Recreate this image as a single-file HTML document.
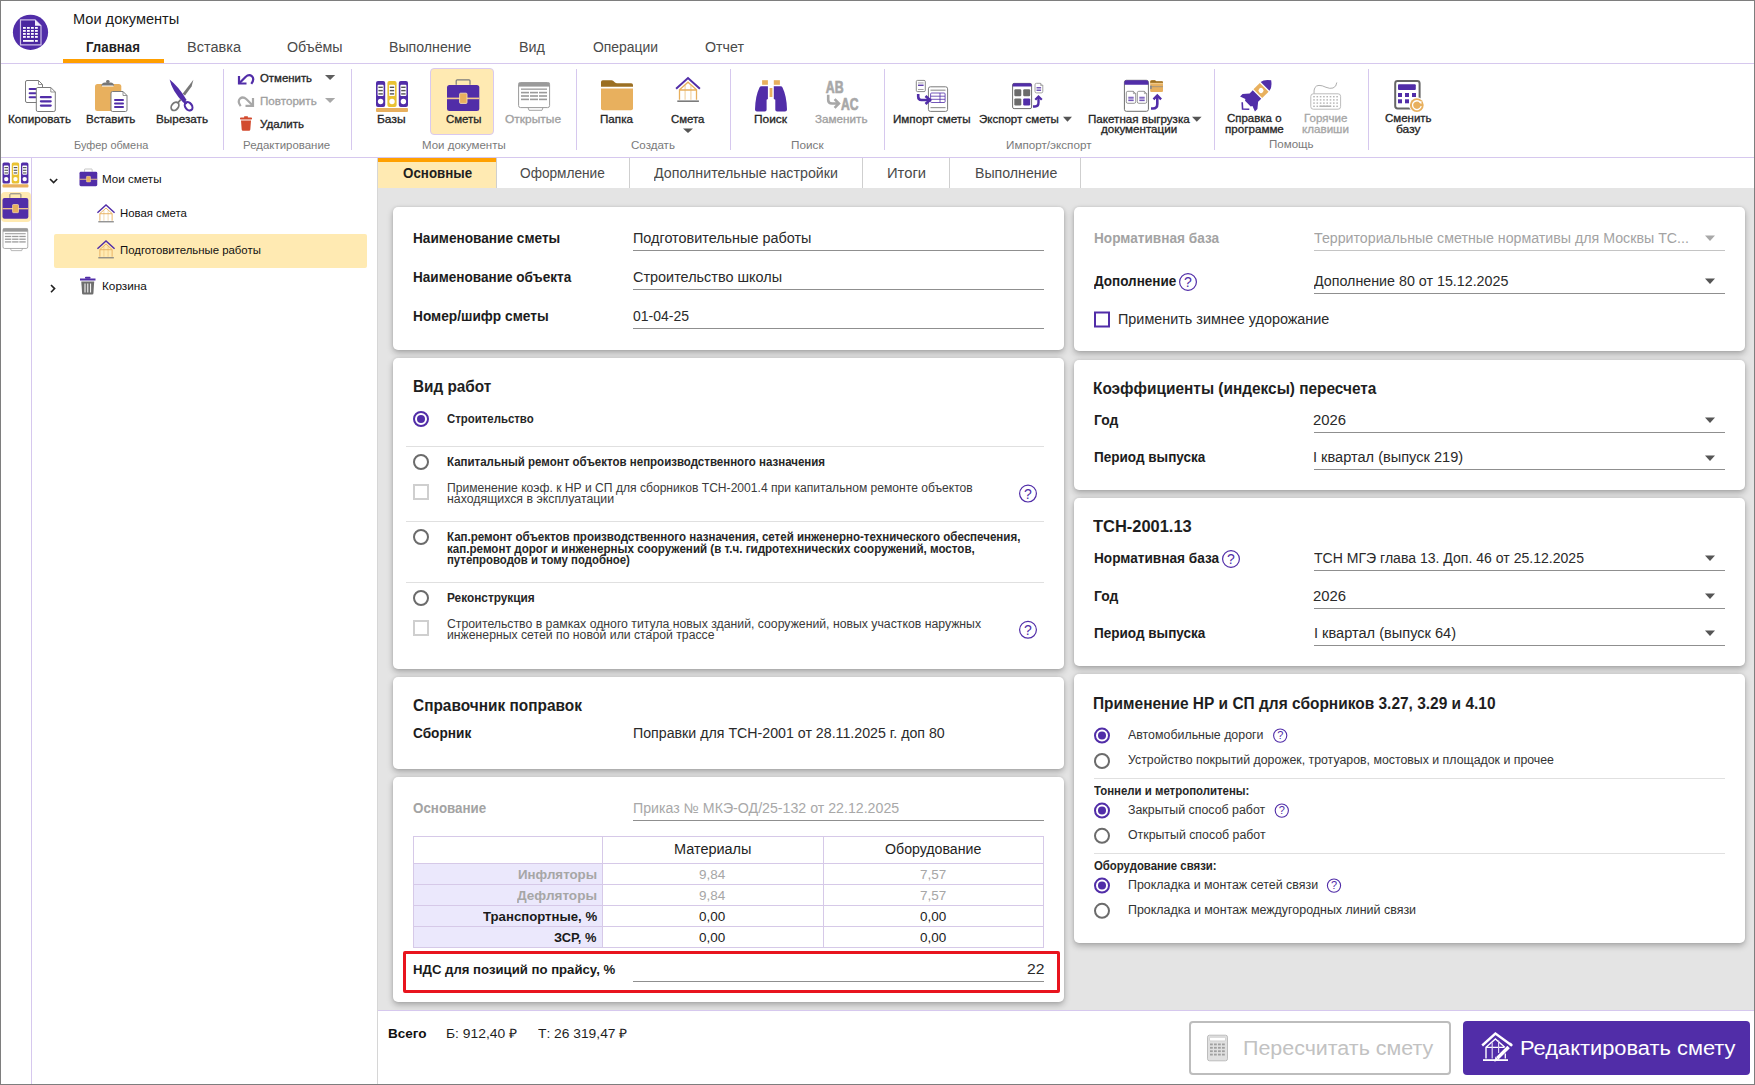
<!DOCTYPE html>
<html><head><meta charset="utf-8"><style>
html,body{margin:0;padding:0;}
body{width:1755px;height:1085px;overflow:hidden;position:relative;background:#fff;font-family:'Liberation Sans',sans-serif;}
.t{position:absolute;white-space:pre;z-index:5;}
svg.ov{position:absolute;left:0;top:0;z-index:4;}
</style></head><body>
<div style="position:absolute;left:63px;top:59px;width:101px;height:4px;background:#ff9f00"></div><div style="position:absolute;left:0px;top:63px;width:1755px;height:1px;background:#d6c8ee"></div><div style="position:absolute;left:223px;top:69px;width:1px;height:81px;background:#d6c8ee"></div><div style="position:absolute;left:351px;top:69px;width:1px;height:81px;background:#d6c8ee"></div><div style="position:absolute;left:576px;top:69px;width:1px;height:81px;background:#d6c8ee"></div><div style="position:absolute;left:730px;top:69px;width:1px;height:81px;background:#d6c8ee"></div><div style="position:absolute;left:884px;top:69px;width:1px;height:81px;background:#d6c8ee"></div><div style="position:absolute;left:1214px;top:69px;width:1px;height:81px;background:#d6c8ee"></div><div style="position:absolute;left:1368px;top:69px;width:1px;height:81px;background:#d6c8ee"></div><div style="position:absolute;left:0px;top:157px;width:1755px;height:1px;background:#d6c8ee"></div><div style="position:absolute;left:430px;top:68px;width:64px;height:67px;background:#ffeab2;border:1px solid #d9c9ef;border-radius:4px;box-sizing:border-box"></div><div style="position:absolute;left:31px;top:158px;width:1px;height:927px;background:#d6c8ee"></div><div style="position:absolute;left:1px;top:192px;width:30px;height:30px;background:#ffeab2;border-radius:4px"></div><div style="position:absolute;left:377px;top:158px;width:1px;height:927px;background:#d6d6d6"></div><div style="position:absolute;left:54px;top:234px;width:313px;height:34px;background:#ffeab2;border-radius:2px"></div><div style="position:absolute;left:378px;top:158px;width:1377px;height:30px;background:#fff"></div><div style="position:absolute;left:378px;top:158px;width:118px;height:30px;background:#ffeab2"></div><div style="position:absolute;left:378px;top:158px;width:118px;height:4px;background:#ffa000"></div><div style="position:absolute;left:496px;top:158px;width:1px;height:30px;background:#cfcfcf"></div><div style="position:absolute;left:629px;top:158px;width:1px;height:30px;background:#cfcfcf"></div><div style="position:absolute;left:862px;top:158px;width:1px;height:30px;background:#cfcfcf"></div><div style="position:absolute;left:949px;top:158px;width:1px;height:30px;background:#cfcfcf"></div><div style="position:absolute;left:1080px;top:158px;width:1px;height:30px;background:#cfcfcf"></div><div style="position:absolute;left:378px;top:188px;width:1376px;height:822px;background:#e4e4e4"></div><div style="position:absolute;left:393px;top:207px;width:671px;height:143px;background:#fff;border-radius:5px;box-shadow:0 3px 6px rgba(0,0,0,0.26), 0 0 3px rgba(0,0,0,0.10)"></div><div style="position:absolute;left:393px;top:358px;width:671px;height:311px;background:#fff;border-radius:5px;box-shadow:0 3px 6px rgba(0,0,0,0.26), 0 0 3px rgba(0,0,0,0.10)"></div><div style="position:absolute;left:393px;top:677px;width:671px;height:92px;background:#fff;border-radius:5px;box-shadow:0 3px 6px rgba(0,0,0,0.26), 0 0 3px rgba(0,0,0,0.10)"></div><div style="position:absolute;left:393px;top:777px;width:671px;height:225px;background:#fff;border-radius:5px;box-shadow:0 3px 6px rgba(0,0,0,0.26), 0 0 3px rgba(0,0,0,0.10)"></div><div style="position:absolute;left:1074px;top:207px;width:671px;height:144px;background:#fff;border-radius:5px;box-shadow:0 3px 6px rgba(0,0,0,0.26), 0 0 3px rgba(0,0,0,0.10)"></div><div style="position:absolute;left:1074px;top:360px;width:671px;height:130px;background:#fff;border-radius:5px;box-shadow:0 3px 6px rgba(0,0,0,0.26), 0 0 3px rgba(0,0,0,0.10)"></div><div style="position:absolute;left:1074px;top:498px;width:671px;height:168px;background:#fff;border-radius:5px;box-shadow:0 3px 6px rgba(0,0,0,0.26), 0 0 3px rgba(0,0,0,0.10)"></div><div style="position:absolute;left:1074px;top:674px;width:671px;height:269px;background:#fff;border-radius:5px;box-shadow:0 3px 6px rgba(0,0,0,0.26), 0 0 3px rgba(0,0,0,0.10)"></div><div style="position:absolute;left:633px;top:250px;width:411px;height:1px;background:#8f8f8f"></div><div style="position:absolute;left:633px;top:289px;width:411px;height:1px;background:#8f8f8f"></div><div style="position:absolute;left:633px;top:328px;width:411px;height:1px;background:#8f8f8f"></div><div style="position:absolute;left:406px;top:446px;width:638px;height:1px;background:#e0e0e0"></div><div style="position:absolute;left:406px;top:521px;width:638px;height:1px;background:#e0e0e0"></div><div style="position:absolute;left:406px;top:582px;width:638px;height:1px;background:#e0e0e0"></div><div style="position:absolute;left:633px;top:820px;width:411px;height:1px;background:#8f8f8f"></div><div style="position:absolute;left:413px;top:836px;width:631px;height:112px;border:1px solid #d6c9e8;box-sizing:border-box"></div><div style="position:absolute;left:414px;top:863px;width:188px;height:84px;background:#ebe8fc"></div><div style="position:absolute;left:413px;top:863px;width:631px;height:1px;background:#d6c9e8"></div><div style="position:absolute;left:413px;top:884px;width:631px;height:1px;background:#d6c9e8"></div><div style="position:absolute;left:413px;top:905px;width:631px;height:1px;background:#d6c9e8"></div><div style="position:absolute;left:413px;top:926px;width:631px;height:1px;background:#d6c9e8"></div><div style="position:absolute;left:602px;top:836px;width:1px;height:112px;background:#d6c9e8"></div><div style="position:absolute;left:823px;top:836px;width:1px;height:112px;background:#d6c9e8"></div><div style="position:absolute;left:403px;top:951px;width:657px;height:42px;border:3px solid #e8141e;border-radius:2px;box-sizing:border-box"></div><div style="position:absolute;left:633px;top:981px;width:411px;height:1px;background:#8f8f8f"></div><div style="position:absolute;left:1314px;top:250px;width:411px;height:1px;background:#c4c4c4"></div><div style="position:absolute;left:1314px;top:293px;width:411px;height:1px;background:#8f8f8f"></div><div style="position:absolute;left:1314px;top:432px;width:411px;height:1px;background:#8f8f8f"></div><div style="position:absolute;left:1314px;top:469px;width:411px;height:1px;background:#8f8f8f"></div><div style="position:absolute;left:1314px;top:570px;width:411px;height:1px;background:#8f8f8f"></div><div style="position:absolute;left:1314px;top:608px;width:411px;height:1px;background:#8f8f8f"></div><div style="position:absolute;left:1314px;top:645px;width:411px;height:1px;background:#8f8f8f"></div><div style="position:absolute;left:1094px;top:778px;width:631px;height:1px;background:#e0e0e0"></div><div style="position:absolute;left:1094px;top:853px;width:631px;height:1px;background:#e0e0e0"></div><div style="position:absolute;left:378px;top:1010px;width:1376px;height:1px;background:#d6c8ee"></div><div style="position:absolute;left:1189px;top:1021px;width:262px;height:54px;border:2px solid #bdbdbd;border-radius:4px;box-sizing:border-box;background:#fff"></div><div style="position:absolute;left:1463px;top:1021px;width:287px;height:54px;background:#512da8;border-radius:4px"></div><div style="position:absolute;left:0px;top:0px;width:1755px;height:1085px;border:1px solid #7e7e7e;box-sizing:border-box;z-index:50"></div>
<svg class="ov" width="1755" height="1085" viewBox="0 0 1755 1085"><circle cx="30.5" cy="32.3" r="17.6" fill="#512da8"/><path d="M20.5 19.8 H35 L41 25.8 V44.8 H20.5 Z" fill="#4a27a0" stroke="#cdbfe8" stroke-width="1.2"/><path d="M35 19.8 V25.8 H41 Z" fill="#f4f0fb"/><rect x="23" y="27" width="2.8" height="1.8" fill="#fff"/><rect x="27" y="27" width="2.8" height="1.8" fill="#fff"/><rect x="31" y="27" width="2.8" height="1.8" fill="#fff"/><rect x="35" y="27" width="2.8" height="1.8" fill="#fff"/><rect x="23" y="30" width="2.8" height="1.8" fill="#fff"/><rect x="27" y="30" width="2.8" height="1.8" fill="#fff"/><rect x="31" y="30" width="2.8" height="1.8" fill="#fff"/><rect x="35" y="30" width="2.8" height="1.8" fill="#fff"/><rect x="23" y="33" width="2.8" height="1.8" fill="#fff"/><rect x="27" y="33" width="2.8" height="1.8" fill="#fff"/><rect x="31" y="33" width="2.8" height="1.8" fill="#fff"/><rect x="35" y="33" width="2.8" height="1.8" fill="#fff"/><rect x="23" y="36" width="2.8" height="1.8" fill="#fff"/><rect x="27" y="36" width="2.8" height="1.8" fill="#fff"/><rect x="31" y="36" width="2.8" height="1.8" fill="#fff"/><rect x="35" y="36" width="2.8" height="1.8" fill="#fff"/><rect x="23" y="40" width="10.8" height="1.8" fill="#fff"/><rect x="35" y="40" width="2.8" height="1.8" fill="#fff"/><path d="M25.5 82.0 Q25.5 80.5 27.0 80.5 H38.5 L42.5 84.5 V101.0 Q42.5 102.5 41.0 102.5 H27.0 Q25.5 102.5 25.5 101.0 Z" fill="#fff" stroke="#7b7b7b" stroke-width="1"/><path d="M38.5 80.5 V84.5 H42.5" fill="none" stroke="#7b7b7b" stroke-width="0.8"/><rect x="28.6" y="87.9" width="8" height="2" rx="1" fill="#512da8"/><rect x="28.6" y="92.3" width="8" height="2" rx="1" fill="#512da8"/><rect x="28.6" y="96.3" width="8" height="2" rx="1" fill="#512da8"/><path d="M36.3 89.0 Q36.3 87.5 37.8 87.5 H50.8 L55.3 92.0 V110.0 Q55.3 111.5 53.8 111.5 H37.8 Q36.3 111.5 36.3 110.0 Z" fill="#fff" stroke="#7b7b7b" stroke-width="1"/><path d="M50.8 87.5 V92.0 H55.3" fill="none" stroke="#7b7b7b" stroke-width="0.8"/><rect x="39.8" y="96.10000000000001" width="12" height="2.2" rx="1.1" fill="#512da8"/><rect x="39.8" y="100.2" width="12" height="2.2" rx="1.1" fill="#512da8"/><rect x="39.8" y="104.5" width="12" height="2.2" rx="1.1" fill="#512da8"/><rect x="95" y="84" width="26.3" height="27" rx="2.5" fill="#e8b05e"/><path d="M101.5 86 Q101.5 82.5 105 82.5 H110.5 Q114 82.5 114 86 Z" fill="#777"/><rect x="106" y="80" width="3.6" height="3" rx="1.5" fill="#777"/><path d="M102 86 H113.5" stroke="#fff" stroke-width="1"/><path d="M111 93.0 Q111 91.5 112.5 91.5 H123 L127 95.5 V110.0 Q127 111.5 125.5 111.5 H112.5 Q111 111.5 111 110.0 Z" fill="#fff" stroke="#7b7b7b" stroke-width="1"/><path d="M123 91.5 V95.5 H127" fill="none" stroke="#7b7b7b" stroke-width="0.8"/><rect x="114" y="99" width="10" height="2" rx="1" fill="#512da8"/><rect x="114" y="102.4" width="10" height="2" rx="1" fill="#512da8"/><rect x="114" y="106" width="10" height="2" rx="1" fill="#512da8"/><path d="M169.6 79.6 Q178.5 86.5 186.6 100 L183.4 102.8 Q172 91 169.6 79.6 Z" fill="#512da8"/><path d="M183.5 100.5 L186.5 104" stroke="#512da8" stroke-width="2.2"/><ellipse cx="188.6" cy="106.3" rx="3.3" ry="4.6" transform="rotate(-38 188.6 106.3)" fill="none" stroke="#512da8" stroke-width="2.1"/><path d="M193.4 79.8 L191.6 86.5 L185 95.5 L182.6 93.8 Z" fill="#777"/><path d="M180.8 99.5 L177.8 103" stroke="#777" stroke-width="1.9"/><ellipse cx="175" cy="106.3" rx="3.3" ry="4.6" transform="rotate(38 175 106.3)" fill="none" stroke="#777" stroke-width="1.8"/><path d="M239 76 V83.5 H246.5" fill="none" stroke="#512da8" stroke-width="2.2"/><path d="M239 83.5 L245.5 77 Q249 73.8 252 76.3 Q254.8 79.2 251.3 83.8" fill="none" stroke="#512da8" stroke-width="2.2"/><path d="M253 98 V105.8 H245.5" fill="none" stroke="#a8a8a8" stroke-width="2.2"/><path d="M253 105.8 L246.5 99.3 Q243 96.1 240 98.6 Q237.2 101.5 240.7 106.1" fill="none" stroke="#a8a8a8" stroke-width="2.2"/><path d="M325 75 H335.2 L330.1 80 Z" fill="#5e5e5e"/><path d="M325 98 H335.2 L330.1 103 Z" fill="#a8a8a8"/><rect x="240" y="117.5" width="12" height="2" rx="0.8" fill="#d24a2e"/><rect x="244" y="116.3" width="4" height="1.6" rx="0.6" fill="#d24a2e"/><path d="M241 120.5 H251 L250.3 129.5 Q250.2 130.8 249 130.8 H243 Q241.8 130.8 241.7 129.5 Z" fill="#d24a2e"/><rect x="376.0" y="81" width="9.2" height="26.0" rx="2.0" fill="#512da8"/><rect x="377.6" y="84.8" width="6.0" height="11.2" rx="1.0" fill="#fff"/><rect x="378.4" y="86.6" width="4.4" height="1.4" fill="#555"/><rect x="378.4" y="89.9" width="4.4" height="1.4" fill="#555"/><rect x="378.4" y="93.2" width="4.4" height="1.4" fill="#555"/><circle cx="380.6" cy="101.5" r="2.7" fill="#fff"/><rect x="387.4" y="81" width="9.2" height="26.0" rx="2.0" fill="#e9c232"/><rect x="389.0" y="84.8" width="6.0" height="11.2" rx="1.0" fill="#fff"/><rect x="389.79999999999995" y="86.6" width="4.4" height="1.4" fill="#555"/><rect x="389.79999999999995" y="89.9" width="4.4" height="1.4" fill="#555"/><rect x="389.79999999999995" y="93.2" width="4.4" height="1.4" fill="#555"/><circle cx="392.0" cy="101.5" r="2.7" fill="#fff"/><rect x="398.8" y="81" width="9.2" height="26.0" rx="2.0" fill="#512da8"/><rect x="400.40000000000003" y="84.8" width="6.0" height="11.2" rx="1.0" fill="#fff"/><rect x="401.2" y="86.6" width="4.4" height="1.4" fill="#555"/><rect x="401.2" y="89.9" width="4.4" height="1.4" fill="#555"/><rect x="401.2" y="93.2" width="4.4" height="1.4" fill="#555"/><circle cx="403.40000000000003" cy="101.5" r="2.7" fill="#fff"/><rect x="376" y="108.0" width="32.0" height="4.0" rx="1.0" fill="#e8b05e"/><path d="M456.2 84.8 V80.8 Q456.2 79.8 457.2 79.8 H469.0 Q470.0 79.8 470.0 80.8 V84.8" fill="none" stroke="#7b7b7b" stroke-width="1.2"/><rect x="447" y="85.0" width="32.3" height="26.0" rx="2.5" fill="#512da8"/><rect x="447" y="97.6" width="32.3" height="1.6" fill="#f3c98a"/><rect x="459.6" y="93.2" width="7.4" height="10.2" rx="1.0" fill="#e8b05e" stroke="#f6dcae" stroke-width="0.9"/><rect x="518.6" y="82.6" width="31.0" height="25.0" rx="2.0" fill="#fff" stroke="#9a9a9a" stroke-width="1.0"/><rect x="518.6" y="82.6" width="31.0" height="4.0" fill="#9a9a9a"/><path d="M528.0 107.6 L529.0 110.3 H542.0 L543.0 107.6" fill="none" stroke="#9a9a9a" stroke-width="0.9"/><rect x="521.0" y="88.5" width="26.0" height="1.3" fill="#9a9a9a"/><rect x="521.0" y="91.8" width="8.0" height="1.6" fill="#9a9a9a"/><rect x="530.0" y="91.8" width="8.0" height="1.6" fill="#9a9a9a"/><rect x="539.0" y="91.8" width="8.0" height="1.6" fill="#9a9a9a"/><rect x="521.0" y="95.2" width="8.0" height="1.6" fill="#9a9a9a"/><rect x="530.0" y="95.2" width="8.0" height="1.6" fill="#9a9a9a"/><rect x="539.0" y="95.2" width="8.0" height="1.6" fill="#9a9a9a"/><rect x="521.0" y="98.6" width="8.0" height="1.6" fill="#9a9a9a"/><rect x="530.0" y="98.6" width="8.0" height="1.6" fill="#9a9a9a"/><rect x="539.0" y="98.6" width="8.0" height="1.6" fill="#9a9a9a"/><path d="M683 128.4 H693 L688 133 Z" fill="#555"/><path d="M601 86.8 V82 Q601 80.2 602.8 80.2 H611.5 Q612.6 80.2 613.4 81 L615 82.5 Q615.8 83.3 617 83.3 H631.2 Q633 83.3 633 85 V86.8 Z" fill="#9b6f22"/><path d="M601 88.4 H633 V108.3 Q633 110.3 631 110.3 H603 Q601 110.3 601 108.3 Z" fill="#e8b05e"/><path d="M676.1 88.7 L688.0 78.0 L699.9 88.7" fill="none" stroke="#512da8" stroke-width="2.0"/><path d="M679.5 99.7 V89.7 L688.0 82.2 L696.5 89.7 V99.7 M679.5 90.0 H696.5" fill="none" stroke="#e8b05e" stroke-width="1.3"/><path d="M685.1 85.2 V99.7 M690.9 85.2 V99.7" fill="none" stroke="#e8b05e" stroke-opacity="0.55" stroke-width="1.2"/><rect x="677.3" y="100.4" width="21.6" height="1.6" fill="#7b7b7b"/><rect x="762.1" y="80.2" width="5.8" height="4.6" fill="#e8b05e"/><rect x="773.8" y="80.2" width="6.1" height="4.6" fill="#e8b05e"/><path d="M759.5 87.5 Q760 86.2 761.5 86.2 H767.9 V99 L766.6 99.8 V109.8 Q766.6 111.5 764.8 111.5 H757 Q755 111.5 755 109.5 Q755.3 96 759.5 87.5 Z" fill="#512da8"/><path d="M782.5 87.5 Q782 86.2 780.5 86.2 H773.8 V99 L775.3 99.8 V109.8 Q775.3 111.5 777.1 111.5 H785 Q787 111.5 787 109.5 Q786.7 96 782.5 87.5 Z" fill="#512da8"/><rect x="769.6" y="88" width="2.8" height="9" fill="#e8b05e"/><text x="825.8" y="93.4" font-family="Liberation Sans" font-weight="700" font-size="16.5" fill="#a8a8a8" stroke="#a8a8a8" stroke-width="0.7" textLength="17.8" lengthAdjust="spacingAndGlyphs">AB</text><text x="841" y="110.2" font-family="Liberation Sans" font-weight="700" font-size="16.5" fill="#a8a8a8" stroke="#a8a8a8" stroke-width="0.7" textLength="17.5" lengthAdjust="spacingAndGlyphs">AC</text><path d="M828.2 94.8 V100 Q828.2 103.5 832 103.5 H838.5 M834.6 99.2 L838.9 103.5 L834.6 107.8" fill="none" stroke="#a8a8a8" stroke-width="2.6"/><path d="M1063 116.8 H1072 L1067.5 121.8 Z" fill="#555"/><path d="M1192 116.8 H1201.6 L1196.8 121.8 Z" fill="#555"/><rect x="916.3" y="80.4" width="9" height="11.2" rx="1.2" fill="#fff" stroke="#7b7b7b" stroke-width="0.9"/><rect x="918" y="82.5" width="5.6" height="0.9" fill="#999"/><rect x="918" y="84.6" width="5.6" height="1.3" fill="#512da8"/><rect x="918" y="89" width="5.6" height="0.9" fill="#999"/><rect x="928.4" y="86.8" width="19.2" height="24.6" rx="2" fill="#fff" stroke="#7b7b7b" stroke-width="1"/><rect x="930.5" y="89.6" width="15" height="1.2" fill="#999"/><rect x="930.5" y="107" width="15" height="1.2" fill="#999"/><rect x="930.6" y="93" width="14.5" height="9.5" rx="1" fill="none" stroke="#512da8" stroke-width="0.8"/><path d="M930.6 96.2 H945 M930.6 99.3 H945 M940 93 V102.5" stroke="#512da8" stroke-width="0.8"/><path d="M918.2 94 V96.5 Q918.2 100 921.5 100 H929" fill="none" stroke="#512da8" stroke-width="2.6"/><path d="M925.5 96 L930 100 L925.5 104" fill="none" stroke="#512da8" stroke-width="2.6"/><rect x="1012.6" y="83.4" width="19" height="25.2" rx="1.5" fill="#fff" stroke="#6e6e6e" stroke-width="1"/><path d="M1012.6 86.6 V84.9 Q1012.6 83.2 1014.3 83.2 H1029.9 Q1031.6 83.2 1031.6 84.9 V86.6 Z" fill="#512da8"/><rect x="1014.3" y="89.3" width="7" height="7" rx="1.2" fill="#6b6b6b"/><rect x="1023.2" y="89.3" width="7" height="7" rx="1.2" fill="#6b6b6b"/><rect x="1014.3" y="98.4" width="7" height="7" rx="1.2" fill="#6b6b6b"/><rect x="1023.2" y="98.4" width="7" height="7" rx="1.2" fill="#512da8"/><path d="M1035 84.8 Q1035 83.3 1036.5 83.3 H1040.6 L1042.8 85.5 V91.39999999999999 Q1042.8 92.89999999999999 1041.3 92.89999999999999 H1036.5 Q1035 92.89999999999999 1035 91.39999999999999 Z" fill="#fff" stroke="#8a8a8a" stroke-width="0.8"/><path d="M1040.6 83.3 V85.5 H1042.8" fill="none" stroke="#8a8a8a" stroke-width="0.6400000000000001"/><rect x="1036.5" y="87" width="4.6" height="0.8" fill="#512da8"/><rect x="1036.5" y="88.6" width="4.6" height="0.8" fill="#512da8"/><rect x="1036.5" y="90.2" width="4.6" height="0.8" fill="#512da8"/><path d="M1033 106.5 H1035 Q1038.5 106.5 1038.5 102.5 V97" fill="none" stroke="#512da8" stroke-width="2.4"/><path d="M1035.3 99.8 L1038.5 96.5 L1041.8 99.8" fill="none" stroke="#512da8" stroke-width="2.2"/><rect x="1124.4" y="80.3" width="24" height="31" rx="2" fill="#fff" stroke="#6e6e6e" stroke-width="1"/><path d="M1124.4 84.8 V82.3 Q1124.4 80.3 1126.4 80.3 H1146.4 Q1148.4 80.3 1148.4 82.3 V84.8 Z" fill="#512da8"/><path d="M1126.3 92.8 Q1126.3 91.3 1127.8 91.3 H1133.4 L1135.7 93.6 V101.8 Q1135.7 103.3 1134.2 103.3 H1127.8 Q1126.3 103.3 1126.3 101.8 Z" fill="#fff" stroke="#7b7b7b" stroke-width="0.8"/><path d="M1133.4 91.3 V93.6 H1135.7" fill="none" stroke="#7b7b7b" stroke-width="0.6400000000000001"/><rect x="1128.3" y="96.8" width="5.4" height="0.9" fill="#512da8"/><rect x="1128.3" y="98.5" width="5.4" height="0.9" fill="#512da8"/><rect x="1128.3" y="100.2" width="5.4" height="0.9" fill="#512da8"/><path d="M1137.3 92.8 Q1137.3 91.3 1138.8 91.3 H1144.4 L1146.7 93.6 V101.8 Q1146.7 103.3 1145.2 103.3 H1138.8 Q1137.3 103.3 1137.3 101.8 Z" fill="#fff" stroke="#7b7b7b" stroke-width="0.8"/><path d="M1144.4 91.3 V93.6 H1146.7" fill="none" stroke="#7b7b7b" stroke-width="0.6400000000000001"/><rect x="1139.3" y="96.8" width="5.4" height="0.9" fill="#512da8"/><rect x="1139.3" y="98.5" width="5.4" height="0.9" fill="#512da8"/><rect x="1139.3" y="100.2" width="5.4" height="0.9" fill="#512da8"/><path d="M1150.2 81.5 Q1150.2 80.3 1151.4 80.3 H1155 L1156.2 81.6 H1162 Q1163 81.6 1163 82.6 V91 Q1163 92 1162 92 H1151.2 Q1150.2 92 1150.2 91 Z" fill="#e8b05e"/><path d="M1150.2 82 Q1150.2 80.2 1152 80.2 H1155 L1156.2 81.3 H1162 Q1163 81.3 1163 82.3 V82.8 H1150.2 Z" fill="#9b6f22"/><path d="M1150.2 83.6 H1163" stroke="#f3d29a" stroke-width="0.8"/><path d="M1150.5 86.6 H1163" stroke="#7f8590" stroke-width="1.1" stroke-dasharray="1 1"/><rect x="1150.2" y="85.6" width="1.5" height="3.5" fill="#7f8590"/><path d="M1151 108.5 H1153 Q1157.3 108.5 1157.3 104 V96.5" fill="none" stroke="#512da8" stroke-width="2.6"/><path d="M1153.5 99.3 L1157.3 95.5 L1161.1 99.3" fill="none" stroke="#512da8" stroke-width="2.4"/><g transform="translate(1256 95.5) rotate(45)"><path d="M0 -21.5 Q6 -17 6.2 -12.8 H-6.2 Q-6 -17 0 -21.5 Z" fill="#512da8"/><path d="M-6.2 -11.6 H6.2 V-2.6 H-6.2 Z" fill="#e8b05e"/><circle cx="0" cy="-7.1" r="2.5" fill="#fff"/><path d="M-6 -1.4 H6 V3 L10.5 8.5 V12 L5 10 L4 11.5 H-4 L-5 10 L-10.5 12 V8.5 L-6 3 Z" fill="#512da8"/><path d="M-5 14.5 L0 19 L5 14.5" fill="none" stroke="#512da8" stroke-width="1.6"/></g><rect x="1310.8" y="93.8" width="29.8" height="15.4" rx="2.5" fill="#fff" stroke="#bdbdbd" stroke-width="1"/><path d="M1314 93.6 Q1313.5 85.5 1319 85.4 Q1322 85.3 1326 87.3 Q1330 89 1333 88 Q1336.5 86.8 1336.8 82.5" fill="none" stroke="#a6a6a6" stroke-width="0.9"/><rect x="1313.2" y="96.0" width="1.6" height="1.4" fill="#b5b5b5"/><rect x="1316.5" y="96.0" width="1.6" height="1.4" fill="#b5b5b5"/><rect x="1319.8" y="96.0" width="1.6" height="1.4" fill="#b5b5b5"/><rect x="1323.1000000000001" y="96.0" width="1.6" height="1.4" fill="#b5b5b5"/><rect x="1326.4" y="96.0" width="1.6" height="1.4" fill="#b5b5b5"/><rect x="1329.7" y="96.0" width="1.6" height="1.4" fill="#b5b5b5"/><rect x="1333.0" y="96.0" width="1.6" height="1.4" fill="#b5b5b5"/><rect x="1336.3" y="96.0" width="1.6" height="1.4" fill="#b5b5b5"/><rect x="1313.2" y="99.2" width="1.6" height="1.4" fill="#b5b5b5"/><rect x="1316.5" y="99.2" width="1.6" height="1.4" fill="#b5b5b5"/><rect x="1319.8" y="99.2" width="1.6" height="1.4" fill="#b5b5b5"/><rect x="1323.1000000000001" y="99.2" width="1.6" height="1.4" fill="#b5b5b5"/><rect x="1326.4" y="99.2" width="1.6" height="1.4" fill="#b5b5b5"/><rect x="1329.7" y="99.2" width="1.6" height="1.4" fill="#b5b5b5"/><rect x="1333.0" y="99.2" width="1.6" height="1.4" fill="#b5b5b5"/><rect x="1336.3" y="99.2" width="1.6" height="1.4" fill="#b5b5b5"/><rect x="1313.2" y="102.4" width="1.6" height="1.4" fill="#b5b5b5"/><rect x="1316.5" y="102.4" width="1.6" height="1.4" fill="#b5b5b5"/><rect x="1319.8" y="102.4" width="1.6" height="1.4" fill="#b5b5b5"/><rect x="1323.1000000000001" y="102.4" width="1.6" height="1.4" fill="#b5b5b5"/><rect x="1326.4" y="102.4" width="1.6" height="1.4" fill="#b5b5b5"/><rect x="1329.7" y="102.4" width="1.6" height="1.4" fill="#b5b5b5"/><rect x="1333.0" y="102.4" width="1.6" height="1.4" fill="#b5b5b5"/><rect x="1336.3" y="102.4" width="1.6" height="1.4" fill="#b5b5b5"/><rect x="1313.2" y="105.6" width="1.6" height="1.4" fill="#b5b5b5"/><rect x="1316.5" y="105.6" width="1.6" height="1.4" fill="#b5b5b5"/><rect x="1319.8" y="105.6" width="1.6" height="1.4" fill="#b5b5b5"/><rect x="1323.1000000000001" y="105.6" width="1.6" height="1.4" fill="#b5b5b5"/><rect x="1326.4" y="105.6" width="1.6" height="1.4" fill="#b5b5b5"/><rect x="1329.7" y="105.6" width="1.6" height="1.4" fill="#b5b5b5"/><rect x="1333.0" y="105.6" width="1.6" height="1.4" fill="#b5b5b5"/><rect x="1336.3" y="105.6" width="1.6" height="1.4" fill="#b5b5b5"/><rect x="1319.5" y="105.5" width="11.5" height="1.5" fill="#b5b5b5"/><rect x="1395.2" y="81" width="24.4" height="27.5" rx="2.4" fill="#fff" stroke="#666" stroke-width="2"/><rect x="1398" y="84.2" width="17.8" height="5.8" rx="1" fill="#512da8"/><rect x="1398" y="93.0" width="4" height="4" fill="#512da8"/><rect x="1405" y="93.0" width="4" height="4" fill="#512da8"/><rect x="1412" y="93.0" width="4" height="4" fill="#512da8"/><rect x="1398" y="99.3" width="4" height="4" fill="#512da8"/><rect x="1405" y="99.3" width="4" height="4" fill="#512da8"/><rect x="1412" y="99.3" width="4" height="4" fill="#512da8"/><circle cx="1416.8" cy="105.1" r="7.9" fill="#fff"/><circle cx="1416.8" cy="105.1" r="6.9" fill="#e8b05e"/><path d="M1420.3 102.3 A4.4 4.4 0 1 0 1421.2 106.2" fill="none" stroke="#fff" stroke-width="1.3"/><path d="M1418.6 101.6 L1421.6 101.2 L1421.3 104.2 Z" fill="#fff"/><rect x="2.5" y="162.5" width="7.452" height="21.060000000000002" rx="1.62" fill="#512da8"/><rect x="3.7960000000000003" y="165.578" width="4.86" height="9.072" rx="0.81" fill="#fff"/><rect x="4.444" y="167.036" width="3.5640000000000005" height="1.134" fill="#555"/><rect x="4.444" y="169.709" width="3.5640000000000005" height="1.134" fill="#555"/><rect x="4.444" y="172.382" width="3.5640000000000005" height="1.134" fill="#555"/><circle cx="6.226" cy="179.105" r="2.1870000000000003" fill="#fff"/><rect x="11.734000000000002" y="162.5" width="7.452" height="21.060000000000002" rx="1.62" fill="#e9c232"/><rect x="13.030000000000001" y="165.578" width="4.86" height="9.072" rx="0.81" fill="#fff"/><rect x="13.678" y="167.036" width="3.5640000000000005" height="1.134" fill="#555"/><rect x="13.678" y="169.709" width="3.5640000000000005" height="1.134" fill="#555"/><rect x="13.678" y="172.382" width="3.5640000000000005" height="1.134" fill="#555"/><circle cx="15.46" cy="179.105" r="2.1870000000000003" fill="#fff"/><rect x="20.968000000000004" y="162.5" width="7.452" height="21.060000000000002" rx="1.62" fill="#512da8"/><rect x="22.264000000000003" y="165.578" width="4.86" height="9.072" rx="0.81" fill="#fff"/><rect x="22.912000000000003" y="167.036" width="3.5640000000000005" height="1.134" fill="#555"/><rect x="22.912000000000003" y="169.709" width="3.5640000000000005" height="1.134" fill="#555"/><rect x="22.912000000000003" y="172.382" width="3.5640000000000005" height="1.134" fill="#555"/><circle cx="24.694000000000003" cy="179.105" r="2.1870000000000003" fill="#fff"/><rect x="2.5" y="184.37" width="25.92" height="3.24" rx="0.81" fill="#e8b05e"/><path d="M9.86 197.8 V194.60000000000002 Q9.86 193.8 10.66 193.8 H20.1 Q20.900000000000002 193.8 20.900000000000002 194.60000000000002 V197.8" fill="none" stroke="#7b7b7b" stroke-width="0.96"/><rect x="2.5" y="197.96" width="25.84" height="20.8" rx="2.0" fill="#512da8"/><rect x="2.5" y="208.04000000000002" width="25.84" height="1.2800000000000002" fill="#f3c98a"/><rect x="12.58" y="204.52" width="5.920000000000001" height="8.16" rx="0.8" fill="#e8b05e" stroke="#f6dcae" stroke-width="0.7200000000000001"/><rect x="2.98" y="228.48" width="24.8" height="20.0" rx="1.6" fill="#fff" stroke="#9a9a9a" stroke-width="0.8"/><rect x="2.98" y="228.48" width="24.8" height="3.2" fill="#9a9a9a"/><path d="M10.5 248.48000000000002 L11.3 250.64 H21.700000000000003 L22.5 248.48000000000002" fill="none" stroke="#9a9a9a" stroke-width="0.7200000000000001"/><rect x="4.9" y="233.2" width="20.8" height="1.04" fill="#9a9a9a"/><rect x="4.9" y="235.84" width="6.4" height="1.2800000000000002" fill="#9a9a9a"/><rect x="12.100000000000001" y="235.84" width="6.4" height="1.2800000000000002" fill="#9a9a9a"/><rect x="19.3" y="235.84" width="6.4" height="1.2800000000000002" fill="#9a9a9a"/><rect x="4.9" y="238.56" width="6.4" height="1.2800000000000002" fill="#9a9a9a"/><rect x="12.100000000000001" y="238.56" width="6.4" height="1.2800000000000002" fill="#9a9a9a"/><rect x="19.3" y="238.56" width="6.4" height="1.2800000000000002" fill="#9a9a9a"/><rect x="4.9" y="241.28" width="6.4" height="1.2800000000000002" fill="#9a9a9a"/><rect x="12.100000000000001" y="241.28" width="6.4" height="1.2800000000000002" fill="#9a9a9a"/><rect x="19.3" y="241.28" width="6.4" height="1.2800000000000002" fill="#9a9a9a"/><path d="M50 179 L53.6 182.6 L57.2 179" fill="none" stroke="#222" stroke-width="1.6"/><path d="M51 285 L54.6 288.6 L51 292.2" fill="none" stroke="#222" stroke-width="1.6"/><path d="M84.56 171.75 V169.55 Q84.56 169 85.11 169 H91.6 Q92.15 169 92.15 169.55 V171.75" fill="none" stroke="#aaa" stroke-width="0.66"/><rect x="79.5" y="171.86" width="17.765" height="14.3" rx="1.375" fill="#512da8"/><rect x="79.5" y="178.79" width="17.765" height="0.8800000000000001" fill="#f3c98a"/><rect x="86.43" y="176.37" width="4.07" height="5.61" rx="0.55" fill="#e8b05e" stroke="#f6dcae" stroke-width="0.49500000000000005"/><path d="M97.432 212.78 L106.0 205.076 L114.568 212.78" fill="none" stroke="#512da8" stroke-width="1.44"/><path d="M99.88 220.7 V213.5 L106.0 208.1 L112.12 213.5 V220.7 M99.88 213.716 H112.12" fill="none" stroke="#e8b05e" stroke-width="0.9359999999999999"/><path d="M103.912 210.26 V220.7 M108.088 210.26 V220.7" fill="none" stroke="#e8b05e" stroke-opacity="0.55" stroke-width="0.864"/><rect x="98.296" y="221.204" width="15.552" height="1.152" fill="#7b7b7b"/><path d="M97.432 248.78 L106.0 241.076 L114.568 248.78" fill="none" stroke="#512da8" stroke-width="1.44"/><path d="M99.88 256.7 V249.5 L106.0 244.1 L112.12 249.5 V256.7 M99.88 249.716 H112.12" fill="none" stroke="#e8b05e" stroke-width="0.9359999999999999"/><path d="M103.912 246.26 V256.7 M108.088 246.26 V256.7" fill="none" stroke="#e8b05e" stroke-opacity="0.55" stroke-width="0.864"/><rect x="98.296" y="257.204" width="15.552" height="1.152" fill="#7b7b7b"/><rect x="80" y="278.5" width="15.5" height="2" fill="#512da8"/><rect x="85" y="276.8" width="5.5" height="2" rx="0.8" fill="#512da8"/><path d="M81.3 281.5 H94.2 L93.4 293.5 Q93.3 294.6 92.2 294.6 H83.3 Q82.2 294.6 82.1 293.5 Z" fill="#6e6e6e"/><path d="M85 283.5 V292.5 M87.8 283.5 V292.5 M90.6 283.5 V292.5" stroke="#fff" stroke-width="1"/><circle cx="421" cy="419" r="7" fill="none" stroke="#512da8" stroke-width="2"/><circle cx="421" cy="419" r="4" fill="#512da8"/><circle cx="421" cy="462" r="7" fill="none" stroke="#6b6b6b" stroke-width="2"/><rect x="414" y="485" width="14" height="14" fill="none" stroke="#cfcfcf" stroke-width="2"/><circle cx="1028" cy="493.6" r="8.4" fill="none" stroke="#512da8" stroke-width="1.2"/><circle cx="421" cy="537" r="7" fill="none" stroke="#6b6b6b" stroke-width="2"/><circle cx="421" cy="598" r="7" fill="none" stroke="#6b6b6b" stroke-width="2"/><rect x="414" y="621" width="14" height="14" fill="none" stroke="#cfcfcf" stroke-width="2"/><circle cx="1028" cy="629.8" r="8.4" fill="none" stroke="#512da8" stroke-width="1.2"/><path d="M1705 235.5 H1715 L1710 241.0 Z" fill="#a8a8a8"/><circle cx="1188" cy="282" r="8.4" fill="none" stroke="#512da8" stroke-width="1.2"/><path d="M1705 278.5 H1715 L1710 284.0 Z" fill="#555"/><rect x="1095" y="312.5" width="14" height="14" fill="none" stroke="#512da8" stroke-width="2"/><path d="M1705 417.5 H1715 L1710 423.0 Z" fill="#555"/><path d="M1705 455.5 H1715 L1710 461.0 Z" fill="#555"/><circle cx="1231" cy="559" r="8.4" fill="none" stroke="#512da8" stroke-width="1.2"/><path d="M1705 555.5 H1715 L1710 561.0 Z" fill="#555"/><path d="M1705 593.5 H1715 L1710 599.0 Z" fill="#555"/><path d="M1705 630.5 H1715 L1710 636.0 Z" fill="#555"/><circle cx="1102" cy="735.6" r="7" fill="none" stroke="#512da8" stroke-width="2"/><circle cx="1102" cy="735.6" r="4" fill="#512da8"/><circle cx="1280.2" cy="735.6" r="6.6000000000000005" fill="none" stroke="#512da8" stroke-width="1.1"/><circle cx="1102" cy="761" r="7" fill="none" stroke="#6b6b6b" stroke-width="2"/><circle cx="1102" cy="810.6" r="7" fill="none" stroke="#512da8" stroke-width="2"/><circle cx="1102" cy="810.6" r="4" fill="#512da8"/><circle cx="1281.8" cy="810.6" r="6.6000000000000005" fill="none" stroke="#512da8" stroke-width="1.1"/><circle cx="1102" cy="835.8" r="7" fill="none" stroke="#6b6b6b" stroke-width="2"/><circle cx="1102" cy="885.6" r="7" fill="none" stroke="#512da8" stroke-width="2"/><circle cx="1102" cy="885.6" r="4" fill="#512da8"/><circle cx="1334" cy="885.6" r="6.6000000000000005" fill="none" stroke="#512da8" stroke-width="1.1"/><circle cx="1102" cy="910.8" r="7" fill="none" stroke="#6b6b6b" stroke-width="2"/><rect x="1207.5" y="1035.2" width="20" height="25.6" rx="2" fill="#e0e0e0" stroke="#bdbdbd" stroke-width="1"/><rect x="1209.5" y="1037.3" width="16" height="3.6" rx="1" fill="#fff" stroke="#bdbdbd" stroke-width="0.6"/><rect x="1210" y="1043.5" width="2.8" height="1.8" fill="#a0a0a0"/><rect x="1214" y="1043.5" width="2.8" height="1.8" fill="#a0a0a0"/><rect x="1218" y="1043.5" width="2.8" height="1.8" fill="#a0a0a0"/><rect x="1222" y="1043.5" width="2.8" height="1.8" fill="#a0a0a0"/><rect x="1210" y="1046.9" width="2.8" height="1.8" fill="#a0a0a0"/><rect x="1214" y="1046.9" width="2.8" height="1.8" fill="#a0a0a0"/><rect x="1218" y="1046.9" width="2.8" height="1.8" fill="#a0a0a0"/><rect x="1222" y="1046.9" width="2.8" height="1.8" fill="#a0a0a0"/><rect x="1210" y="1050.3" width="2.8" height="1.8" fill="#a0a0a0"/><rect x="1214" y="1050.3" width="2.8" height="1.8" fill="#a0a0a0"/><rect x="1218" y="1050.3" width="2.8" height="1.8" fill="#a0a0a0"/><rect x="1222" y="1050.3" width="2.8" height="1.8" fill="#a0a0a0"/><rect x="1210" y="1053.7" width="2.8" height="1.8" fill="#a0a0a0"/><rect x="1214" y="1053.7" width="2.8" height="1.8" fill="#a0a0a0"/><rect x="1218" y="1053.7" width="2.8" height="1.8" fill="#a0a0a0"/><rect x="1222" y="1053.7" width="2.8" height="1.8" fill="#a0a0a0"/><path d="M1482.2 1045.5 L1495.4 1033.6 L1511.2 1045" fill="none" stroke="#fff" stroke-width="2.4"/><path d="M1486 1058.5 V1047.2 L1495.4 1039 L1504.8 1047.2 M1486 1047.4 H1504.5" fill="none" stroke="#fff" stroke-width="1.4"/><path d="M1492.2 1042.5 V1058.5 M1498.6 1040.5 V1053" fill="none" stroke="#e0d8f0" stroke-width="1.2"/><path d="M1505.3 1053.5 V1058.5" fill="none" stroke="#fff" stroke-width="1.3"/><rect x="1483" y="1059.2" width="25" height="1.8" fill="#fff"/><path d="M1508.6 1047 L1497.3 1058.3" stroke="#fff" stroke-width="3.4"/><path d="M1510 1045.6 L1511.8 1043.8" stroke="#fff" stroke-width="3.4"/><path d="M1495.5 1056.6 L1499 1060 L1494.4 1061.8 Z" fill="#fff"/></svg>
<div class="t" style="left:72.52px;top:12.15px;font-size:14px;line-height:14px;font-weight:400;color:#1a1a1a;font-family:'Liberation Sans',sans-serif;transform:scaleX(1.0416);transform-origin:0 0;">Мои документы</div><div class="t" style="left:86.42px;top:40.15px;font-size:14px;line-height:14px;font-weight:700;color:#222;font-family:'Liberation Sans',sans-serif;transform:scaleX(0.9477);transform-origin:0 0;">Главная</div><div class="t" style="left:187.02px;top:40.15px;font-size:14px;line-height:14px;font-weight:400;color:#4a4a4a;font-family:'Liberation Sans',sans-serif;transform:scaleX(1.0368);transform-origin:0 0;">Вставка</div><div class="t" style="left:287.42px;top:40.15px;font-size:14px;line-height:14px;font-weight:400;color:#4a4a4a;font-family:'Liberation Sans',sans-serif;transform:scaleX(1.0162);transform-origin:0 0;">Объёмы</div><div class="t" style="left:389.32px;top:40.15px;font-size:14px;line-height:14px;font-weight:400;color:#4a4a4a;font-family:'Liberation Sans',sans-serif;transform:scaleX(1.0107);transform-origin:0 0;">Выполнение</div><div class="t" style="left:519.22px;top:40.15px;font-size:14px;line-height:14px;font-weight:400;color:#4a4a4a;font-family:'Liberation Sans',sans-serif;transform:scaleX(1.0249);transform-origin:0 0;">Вид</div><div class="t" style="left:592.82px;top:40.15px;font-size:14px;line-height:14px;font-weight:400;color:#4a4a4a;font-family:'Liberation Sans',sans-serif;transform:scaleX(0.9933);transform-origin:0 0;">Операции</div><div class="t" style="left:704.52px;top:40.15px;font-size:14px;line-height:14px;font-weight:400;color:#4a4a4a;font-family:'Liberation Sans',sans-serif;transform:scaleX(1.0161);transform-origin:0 0;">Отчет</div><div class="t" style="left:7.73px;top:113.69px;font-size:11px;line-height:11px;font-weight:400;color:#262626;font-family:'Liberation Sans',sans-serif;-webkit-text-stroke:0.3px #262626;transform:scaleX(1.0642);transform-origin:0 0;">Копировать</div><div class="t" style="left:85.73px;top:113.69px;font-size:11px;line-height:11px;font-weight:400;color:#262626;font-family:'Liberation Sans',sans-serif;-webkit-text-stroke:0.3px #262626;transform:scaleX(1.0579);transform-origin:0 0;">Вставить</div><div class="t" style="left:155.73px;top:113.69px;font-size:11px;line-height:11px;font-weight:400;color:#262626;font-family:'Liberation Sans',sans-serif;-webkit-text-stroke:0.3px #262626;transform:scaleX(1.0634);transform-origin:0 0;">Вырезать</div><div class="t" style="left:73.93px;top:139.69px;font-size:11px;line-height:11px;font-weight:400;color:#7a7a7a;font-family:'Liberation Sans',sans-serif;transform:scaleX(0.9932);transform-origin:0 0;">Буфер обмена</div><div class="t" style="left:259.63px;top:72.69px;font-size:11px;line-height:11px;font-weight:400;color:#262626;font-family:'Liberation Sans',sans-serif;-webkit-text-stroke:0.3px #262626;transform:scaleX(1.0353);transform-origin:0 0;">Отменить</div><div class="t" style="left:259.63px;top:95.69px;font-size:11px;line-height:11px;font-weight:400;color:#a0a0a0;font-family:'Liberation Sans',sans-serif;-webkit-text-stroke:0.3px #a0a0a0;transform:scaleX(1.0565);transform-origin:0 0;">Повторить</div><div class="t" style="left:259.63px;top:118.69px;font-size:11px;line-height:11px;font-weight:400;color:#262626;font-family:'Liberation Sans',sans-serif;-webkit-text-stroke:0.3px #262626;transform:scaleX(1.0510);transform-origin:0 0;">Удалить</div><div class="t" style="left:243.23px;top:139.69px;font-size:11px;line-height:11px;font-weight:400;color:#7a7a7a;font-family:'Liberation Sans',sans-serif;transform:scaleX(1.0399);transform-origin:0 0;">Редактирование</div><div class="t" style="left:377.23px;top:113.69px;font-size:11px;line-height:11px;font-weight:400;color:#262626;font-family:'Liberation Sans',sans-serif;-webkit-text-stroke:0.3px #262626;transform:scaleX(1.0905);transform-origin:0 0;">Базы</div><div class="t" style="left:445.73px;top:113.69px;font-size:11px;line-height:11px;font-weight:400;color:#262626;font-family:'Liberation Sans',sans-serif;-webkit-text-stroke:0.3px #262626;transform:scaleX(1.0391);transform-origin:0 0;">Сметы</div><div class="t" style="left:505.23px;top:113.69px;font-size:11px;line-height:11px;font-weight:400;color:#a0a0a0;font-family:'Liberation Sans',sans-serif;-webkit-text-stroke:0.3px #a0a0a0;transform:scaleX(1.0882);transform-origin:0 0;">Открытые</div><div class="t" style="left:421.63px;top:139.69px;font-size:11px;line-height:11px;font-weight:400;color:#7a7a7a;font-family:'Liberation Sans',sans-serif;transform:scaleX(1.0447);transform-origin:0 0;">Мои документы</div><div class="t" style="left:599.83px;top:113.69px;font-size:11px;line-height:11px;font-weight:400;color:#262626;font-family:'Liberation Sans',sans-serif;-webkit-text-stroke:0.3px #262626;transform:scaleX(1.0573);transform-origin:0 0;">Папка</div><div class="t" style="left:670.83px;top:113.69px;font-size:11px;line-height:11px;font-weight:400;color:#262626;font-family:'Liberation Sans',sans-serif;-webkit-text-stroke:0.3px #262626;transform:scaleX(1.0354);transform-origin:0 0;">Смета</div><div class="t" style="left:630.83px;top:139.69px;font-size:11px;line-height:11px;font-weight:400;color:#7a7a7a;font-family:'Liberation Sans',sans-serif;transform:scaleX(1.0509);transform-origin:0 0;">Создать</div><div class="t" style="left:753.73px;top:113.69px;font-size:11px;line-height:11px;font-weight:400;color:#262626;font-family:'Liberation Sans',sans-serif;-webkit-text-stroke:0.3px #262626;transform:scaleX(1.0838);transform-origin:0 0;">Поиск</div><div class="t" style="left:815.23px;top:113.69px;font-size:11px;line-height:11px;font-weight:400;color:#a0a0a0;font-family:'Liberation Sans',sans-serif;-webkit-text-stroke:0.3px #a0a0a0;transform:scaleX(1.0628);transform-origin:0 0;">Заменить</div><div class="t" style="left:790.73px;top:139.69px;font-size:11px;line-height:11px;font-weight:400;color:#7a7a7a;font-family:'Liberation Sans',sans-serif;transform:scaleX(1.0674);transform-origin:0 0;">Поиск</div><div class="t" style="left:893.23px;top:113.69px;font-size:11px;line-height:11px;font-weight:400;color:#262626;font-family:'Liberation Sans',sans-serif;-webkit-text-stroke:0.3px #262626;transform:scaleX(1.0581);transform-origin:0 0;">Импорт сметы</div><div class="t" style="left:979.03px;top:113.69px;font-size:11px;line-height:11px;font-weight:400;color:#262626;font-family:'Liberation Sans',sans-serif;-webkit-text-stroke:0.3px #262626;transform:scaleX(1.0471);transform-origin:0 0;">Экспорт сметы</div><div class="t" style="left:1088.03px;top:113.69px;font-size:11px;line-height:11px;font-weight:400;color:#262626;font-family:'Liberation Sans',sans-serif;-webkit-text-stroke:0.3px #262626;transform:scaleX(1.0550);transform-origin:0 0;">Пакетная выгрузка</div><div class="t" style="left:1101.03px;top:124.29px;font-size:11px;line-height:11px;font-weight:400;color:#262626;font-family:'Liberation Sans',sans-serif;-webkit-text-stroke:0.3px #262626;transform:scaleX(1.0541);transform-origin:0 0;">документации</div><div class="t" style="left:1006.23px;top:139.69px;font-size:11px;line-height:11px;font-weight:400;color:#7a7a7a;font-family:'Liberation Sans',sans-serif;transform:scaleX(1.0618);transform-origin:0 0;">Импорт/экспорт</div><div class="t" style="left:1227.23px;top:113.39px;font-size:11px;line-height:11px;font-weight:400;color:#262626;font-family:'Liberation Sans',sans-serif;-webkit-text-stroke:0.3px #262626;transform:scaleX(1.0423);transform-origin:0 0;">Справка о</div><div class="t" style="left:1224.93px;top:124.09px;font-size:11px;line-height:11px;font-weight:400;color:#262626;font-family:'Liberation Sans',sans-serif;-webkit-text-stroke:0.3px #262626;transform:scaleX(1.0566);transform-origin:0 0;">программе</div><div class="t" style="left:1303.93px;top:113.39px;font-size:11px;line-height:11px;font-weight:400;color:#a6a6a6;font-family:'Liberation Sans',sans-serif;-webkit-text-stroke:0.3px #a6a6a6;transform:scaleX(1.0495);transform-origin:0 0;">Горячие</div><div class="t" style="left:1301.83px;top:124.09px;font-size:11px;line-height:11px;font-weight:400;color:#a6a6a6;font-family:'Liberation Sans',sans-serif;-webkit-text-stroke:0.3px #a6a6a6;transform:scaleX(1.0563);transform-origin:0 0;">клавиши</div><div class="t" style="left:1268.73px;top:139.29px;font-size:11px;line-height:11px;font-weight:400;color:#7a7a7a;font-family:'Liberation Sans',sans-serif;transform:scaleX(1.0504);transform-origin:0 0;">Помощь</div><div class="t" style="left:1385.23px;top:113.39px;font-size:11px;line-height:11px;font-weight:400;color:#262626;font-family:'Liberation Sans',sans-serif;-webkit-text-stroke:0.3px #262626;transform:scaleX(1.0429);transform-origin:0 0;">Сменить</div><div class="t" style="left:1396.23px;top:124.09px;font-size:11px;line-height:11px;font-weight:400;color:#262626;font-family:'Liberation Sans',sans-serif;-webkit-text-stroke:0.3px #262626;transform:scaleX(1.0922);transform-origin:0 0;">базу</div><div class="t" style="left:102.23px;top:173.69px;font-size:11px;line-height:11px;font-weight:400;color:#111;font-family:'Liberation Sans',sans-serif;transform:scaleX(1.0561);transform-origin:0 0;">Мои сметы</div><div class="t" style="left:120.23px;top:208.49px;font-size:11px;line-height:11px;font-weight:400;color:#111;font-family:'Liberation Sans',sans-serif;transform:scaleX(1.0336);transform-origin:0 0;">Новая смета</div><div class="t" style="left:120.23px;top:244.69px;font-size:11px;line-height:11px;font-weight:400;color:#111;font-family:'Liberation Sans',sans-serif;transform:scaleX(1.0340);transform-origin:0 0;">Подготовительные работы</div><div class="t" style="left:102.23px;top:281.29px;font-size:11px;line-height:11px;font-weight:400;color:#111;font-family:'Liberation Sans',sans-serif;transform:scaleX(1.0700);transform-origin:0 0;">Корзина</div><div class="t" style="left:403.02px;top:166.15px;font-size:14px;line-height:14px;font-weight:700;color:#1e1e1e;font-family:'Liberation Sans',sans-serif;transform:scaleX(0.9539);transform-origin:0 0;">Основные</div><div class="t" style="left:520.42px;top:166.15px;font-size:14px;line-height:14px;font-weight:400;color:#4a4a4a;font-family:'Liberation Sans',sans-serif;transform:scaleX(0.9765);transform-origin:0 0;">Оформление</div><div class="t" style="left:654.02px;top:166.15px;font-size:14px;line-height:14px;font-weight:400;color:#4a4a4a;font-family:'Liberation Sans',sans-serif;transform:scaleX(1.0164);transform-origin:0 0;">Дополнительные настройки</div><div class="t" style="left:886.92px;top:166.15px;font-size:14px;line-height:14px;font-weight:400;color:#4a4a4a;font-family:'Liberation Sans',sans-serif;transform:scaleX(1.0548);transform-origin:0 0;">Итоги</div><div class="t" style="left:974.62px;top:166.15px;font-size:14px;line-height:14px;font-weight:400;color:#4a4a4a;font-family:'Liberation Sans',sans-serif;transform:scaleX(1.0107);transform-origin:0 0;">Выполнение</div><div class="t" style="left:412.72px;top:231.15px;font-size:14px;line-height:14px;font-weight:700;color:#1c1c1c;font-family:'Liberation Sans',sans-serif;transform:scaleX(0.9742);transform-origin:0 0;">Наименование сметы</div><div class="t" style="left:412.72px;top:270.15px;font-size:14px;line-height:14px;font-weight:700;color:#1c1c1c;font-family:'Liberation Sans',sans-serif;transform:scaleX(0.9693);transform-origin:0 0;">Наименование объекта</div><div class="t" style="left:412.72px;top:309.15px;font-size:14px;line-height:14px;font-weight:700;color:#1c1c1c;font-family:'Liberation Sans',sans-serif;transform:scaleX(0.9788);transform-origin:0 0;">Номер/шифр сметы</div><div class="t" style="left:633.02px;top:231.15px;font-size:14px;line-height:14px;font-weight:400;color:#2a2a2a;font-family:'Liberation Sans',sans-serif;transform:scaleX(1.0289);transform-origin:0 0;">Подготовительные работы</div><div class="t" style="left:633.02px;top:270.15px;font-size:14px;line-height:14px;font-weight:400;color:#2a2a2a;font-family:'Liberation Sans',sans-serif;transform:scaleX(1.0312);transform-origin:0 0;">Строительство школы</div><div class="t" style="left:633.02px;top:309.15px;font-size:14px;line-height:14px;font-weight:400;color:#2a2a2a;font-family:'Liberation Sans',sans-serif;">01-04-25</div><div class="t" style="left:412.68px;top:379.46px;font-size:16px;line-height:16px;font-weight:700;color:#1e1e1e;font-family:'Liberation Sans',sans-serif;transform:scaleX(0.9581);transform-origin:0 0;">Вид работ</div><div class="t" style="left:446.76px;top:413.14px;font-size:12px;line-height:12px;font-weight:700;color:#262626;font-family:'Liberation Sans',sans-serif;transform:scaleX(0.9501);transform-origin:0 0;">Строительство</div><div class="t" style="left:446.76px;top:455.84px;font-size:12px;line-height:12px;font-weight:700;color:#262626;font-family:'Liberation Sans',sans-serif;transform:scaleX(0.9587);transform-origin:0 0;">Капитальный ремонт объектов непроизводственного назначения</div><div class="t" style="left:446.76px;top:481.54px;font-size:12px;line-height:12px;font-weight:400;color:#3a3a3a;font-family:'Liberation Sans',sans-serif;transform:scaleX(1.0081);transform-origin:0 0;">Применение коэф. к НР и СП для сборников ТСН-2001.4 при капитальном ремонте объектов</div><div class="t" style="left:446.76px;top:493.14px;font-size:12px;line-height:12px;font-weight:400;color:#3a3a3a;font-family:'Liberation Sans',sans-serif;transform:scaleX(1.0272);transform-origin:0 0;">находящихся в эксплуатации</div><div class="t" style="left:1024.10px;top:486.79px;font-size:14px;line-height:14px;font-weight:400;color:#512da8;font-family:'Liberation Sans',sans-serif;">?</div><div class="t" style="left:446.76px;top:530.84px;font-size:12px;line-height:12px;font-weight:700;color:#262626;font-family:'Liberation Sans',sans-serif;transform:scaleX(0.9621);transform-origin:0 0;">Кап.ремонт объектов производственного назначения, сетей инженерно-технического обеспечения,</div><div class="t" style="left:446.76px;top:542.74px;font-size:12px;line-height:12px;font-weight:700;color:#262626;font-family:'Liberation Sans',sans-serif;transform:scaleX(0.9670);transform-origin:0 0;">кап.ремонт дорог и инженерных сооружений (в т.ч. гидротехнических сооружений, мостов,</div><div class="t" style="left:446.76px;top:554.34px;font-size:12px;line-height:12px;font-weight:700;color:#262626;font-family:'Liberation Sans',sans-serif;transform:scaleX(0.9479);transform-origin:0 0;">путепроводов и тому подобное)</div><div class="t" style="left:446.76px;top:591.64px;font-size:12px;line-height:12px;font-weight:700;color:#262626;font-family:'Liberation Sans',sans-serif;transform:scaleX(0.9855);transform-origin:0 0;">Реконструкция</div><div class="t" style="left:446.76px;top:617.54px;font-size:12px;line-height:12px;font-weight:400;color:#3a3a3a;font-family:'Liberation Sans',sans-serif;transform:scaleX(1.0212);transform-origin:0 0;">Строительство в рамках одного титула новых зданий, сооружений, новых участков наружных</div><div class="t" style="left:446.76px;top:629.44px;font-size:12px;line-height:12px;font-weight:400;color:#3a3a3a;font-family:'Liberation Sans',sans-serif;transform:scaleX(1.0194);transform-origin:0 0;">инженерных сетей по новой или старой трассе</div><div class="t" style="left:1024.10px;top:622.99px;font-size:14px;line-height:14px;font-weight:400;color:#512da8;font-family:'Liberation Sans',sans-serif;">?</div><div class="t" style="left:412.58px;top:698.46px;font-size:16px;line-height:16px;font-weight:700;color:#1e1e1e;font-family:'Liberation Sans',sans-serif;transform:scaleX(0.9631);transform-origin:0 0;">Справочник поправок</div><div class="t" style="left:412.72px;top:726.15px;font-size:14px;line-height:14px;font-weight:700;color:#1c1c1c;font-family:'Liberation Sans',sans-serif;transform:scaleX(0.9751);transform-origin:0 0;">Сборник</div><div class="t" style="left:632.82px;top:726.15px;font-size:14px;line-height:14px;font-weight:400;color:#2a2a2a;font-family:'Liberation Sans',sans-serif;transform:scaleX(1.0141);transform-origin:0 0;">Поправки для ТСН-2001 от 28.11.2025 г. доп 80</div><div class="t" style="left:412.72px;top:801.15px;font-size:14px;line-height:14px;font-weight:700;color:#a3a3a3;font-family:'Liberation Sans',sans-serif;transform:scaleX(0.9545);transform-origin:0 0;">Основание</div><div class="t" style="left:632.82px;top:801.15px;font-size:14px;line-height:14px;font-weight:400;color:#a8a8a8;font-family:'Liberation Sans',sans-serif;transform:scaleX(1.0129);transform-origin:0 0;">Приказ № МКЭ-ОД/25-132 от 22.12.2025</div><div class="t" style="left:673.77px;top:842.15px;font-size:14px;line-height:14px;font-weight:400;color:#1e1e1e;font-family:'Liberation Sans',sans-serif;transform:scaleX(1.0332);transform-origin:0 0;">Материалы</div><div class="t" style="left:885.32px;top:842.15px;font-size:14px;line-height:14px;font-weight:400;color:#1e1e1e;font-family:'Liberation Sans',sans-serif;transform:scaleX(1.0120);transform-origin:0 0;">Оборудование</div><div class="t" style="left:517.79px;top:868.00px;font-size:13px;line-height:13px;font-weight:700;color:#a6a6a6;font-family:'Liberation Sans',sans-serif;transform:scaleX(1.0238);transform-origin:0 0;">Инфляторы</div><div class="t" style="left:699.39px;top:868.00px;font-size:13px;line-height:13px;font-weight:400;color:#a6a6a6;font-family:'Liberation Sans',sans-serif;transform:scaleX(1.0359);transform-origin:0 0;">9,84</div><div class="t" style="left:920.39px;top:868.00px;font-size:13px;line-height:13px;font-weight:400;color:#a6a6a6;font-family:'Liberation Sans',sans-serif;transform:scaleX(1.0359);transform-origin:0 0;">7,57</div><div class="t" style="left:516.89px;top:889.30px;font-size:13px;line-height:13px;font-weight:700;color:#a6a6a6;font-family:'Liberation Sans',sans-serif;transform:scaleX(1.0428);transform-origin:0 0;">Дефляторы</div><div class="t" style="left:699.39px;top:889.30px;font-size:13px;line-height:13px;font-weight:400;color:#a6a6a6;font-family:'Liberation Sans',sans-serif;transform:scaleX(1.0359);transform-origin:0 0;">9,84</div><div class="t" style="left:920.39px;top:889.30px;font-size:13px;line-height:13px;font-weight:400;color:#a6a6a6;font-family:'Liberation Sans',sans-serif;transform:scaleX(1.0359);transform-origin:0 0;">7,57</div><div class="t" style="left:482.79px;top:910.30px;font-size:13px;line-height:13px;font-weight:700;color:#1a1a1a;font-family:'Liberation Sans',sans-serif;transform:scaleX(1.0134);transform-origin:0 0;">Транспортные, %</div><div class="t" style="left:699.39px;top:910.30px;font-size:13px;line-height:13px;font-weight:400;color:#1a1a1a;font-family:'Liberation Sans',sans-serif;transform:scaleX(1.0359);transform-origin:0 0;">0,00</div><div class="t" style="left:920.39px;top:910.30px;font-size:13px;line-height:13px;font-weight:400;color:#1a1a1a;font-family:'Liberation Sans',sans-serif;transform:scaleX(1.0359);transform-origin:0 0;">0,00</div><div class="t" style="left:554.49px;top:931.30px;font-size:13px;line-height:13px;font-weight:700;color:#1a1a1a;font-family:'Liberation Sans',sans-serif;transform:scaleX(0.9894);transform-origin:0 0;">ЗСР, %</div><div class="t" style="left:699.39px;top:931.30px;font-size:13px;line-height:13px;font-weight:400;color:#1a1a1a;font-family:'Liberation Sans',sans-serif;transform:scaleX(1.0359);transform-origin:0 0;">0,00</div><div class="t" style="left:920.39px;top:931.30px;font-size:13px;line-height:13px;font-weight:400;color:#1a1a1a;font-family:'Liberation Sans',sans-serif;transform:scaleX(1.0359);transform-origin:0 0;">0,00</div><div class="t" style="left:412.69px;top:963.00px;font-size:13px;line-height:13px;font-weight:700;color:#1a1a1a;font-family:'Liberation Sans',sans-serif;transform:scaleX(1.0125);transform-origin:0 0;">НДС для позиций по прайсу, %</div><div class="t" style="left:1027.22px;top:962.15px;font-size:14px;line-height:14px;font-weight:400;color:#2a2a2a;font-family:'Liberation Sans',sans-serif;transform:scaleX(1.1208);transform-origin:0 0;">22</div><div class="t" style="left:1093.52px;top:231.15px;font-size:14px;line-height:14px;font-weight:700;color:#a3a3a3;font-family:'Liberation Sans',sans-serif;transform:scaleX(0.9730);transform-origin:0 0;">Нормативная база</div><div class="t" style="left:1314.02px;top:231.15px;font-size:14px;line-height:14px;font-weight:400;color:#a3a3a3;font-family:'Liberation Sans',sans-serif;transform:scaleX(1.0149);transform-origin:0 0;">Территориальные сметные нормативы для Москвы ТС...</div><div class="t" style="left:1093.52px;top:274.15px;font-size:14px;line-height:14px;font-weight:700;color:#1c1c1c;font-family:'Liberation Sans',sans-serif;transform:scaleX(0.9650);transform-origin:0 0;">Дополнение</div><div class="t" style="left:1184.10px;top:275.19px;font-size:14px;line-height:14px;font-weight:400;color:#512da8;font-family:'Liberation Sans',sans-serif;">?</div><div class="t" style="left:1314.22px;top:274.15px;font-size:14px;line-height:14px;font-weight:400;color:#2a2a2a;font-family:'Liberation Sans',sans-serif;transform:scaleX(1.0191);transform-origin:0 0;">Дополнение 80 от 15.12.2025</div><div class="t" style="left:1117.52px;top:311.55px;font-size:14px;line-height:14px;font-weight:400;color:#2a2a2a;font-family:'Liberation Sans',sans-serif;transform:scaleX(1.0276);transform-origin:0 0;">Применить зимнее удорожание</div><div class="t" style="left:1093.38px;top:381.26px;font-size:16px;line-height:16px;font-weight:700;color:#1e1e1e;font-family:'Liberation Sans',sans-serif;transform:scaleX(0.9627);transform-origin:0 0;">Коэффициенты (индексы) пересчета</div><div class="t" style="left:1093.52px;top:412.85px;font-size:14px;line-height:14px;font-weight:700;color:#1c1c1c;font-family:'Liberation Sans',sans-serif;transform:scaleX(0.9902);transform-origin:0 0;">Год</div><div class="t" style="left:1313.32px;top:412.85px;font-size:14px;line-height:14px;font-weight:400;color:#2a2a2a;font-family:'Liberation Sans',sans-serif;transform:scaleX(1.0611);transform-origin:0 0;">2026</div><div class="t" style="left:1093.52px;top:450.45px;font-size:14px;line-height:14px;font-weight:700;color:#1c1c1c;font-family:'Liberation Sans',sans-serif;transform:scaleX(0.9668);transform-origin:0 0;">Период выпуска</div><div class="t" style="left:1313.32px;top:450.45px;font-size:14px;line-height:14px;font-weight:400;color:#2a2a2a;font-family:'Liberation Sans',sans-serif;transform:scaleX(1.0415);transform-origin:0 0;">I квартал (выпуск 219)</div><div class="t" style="left:1093.38px;top:518.96px;font-size:16px;line-height:16px;font-weight:700;color:#1e1e1e;font-family:'Liberation Sans',sans-serif;transform:scaleX(1.0280);transform-origin:0 0;">ТСН-2001.13</div><div class="t" style="left:1093.52px;top:551.05px;font-size:14px;line-height:14px;font-weight:700;color:#1c1c1c;font-family:'Liberation Sans',sans-serif;transform:scaleX(0.9730);transform-origin:0 0;">Нормативная база</div><div class="t" style="left:1227.10px;top:552.19px;font-size:14px;line-height:14px;font-weight:400;color:#512da8;font-family:'Liberation Sans',sans-serif;">?</div><div class="t" style="left:1314.02px;top:551.05px;font-size:14px;line-height:14px;font-weight:400;color:#2a2a2a;font-family:'Liberation Sans',sans-serif;transform:scaleX(1.0035);transform-origin:0 0;">ТСН МГЭ глава 13. Доп. 46 от 25.12.2025</div><div class="t" style="left:1093.52px;top:589.05px;font-size:14px;line-height:14px;font-weight:700;color:#1c1c1c;font-family:'Liberation Sans',sans-serif;transform:scaleX(0.9902);transform-origin:0 0;">Год</div><div class="t" style="left:1313.32px;top:589.05px;font-size:14px;line-height:14px;font-weight:400;color:#2a2a2a;font-family:'Liberation Sans',sans-serif;transform:scaleX(1.0611);transform-origin:0 0;">2026</div><div class="t" style="left:1093.52px;top:625.75px;font-size:14px;line-height:14px;font-weight:700;color:#1c1c1c;font-family:'Liberation Sans',sans-serif;transform:scaleX(0.9668);transform-origin:0 0;">Период выпуска</div><div class="t" style="left:1313.62px;top:625.75px;font-size:14px;line-height:14px;font-weight:400;color:#2a2a2a;font-family:'Liberation Sans',sans-serif;transform:scaleX(1.0416);transform-origin:0 0;">I квартал (выпуск 64)</div><div class="t" style="left:1093.38px;top:695.66px;font-size:16px;line-height:16px;font-weight:700;color:#1e1e1e;font-family:'Liberation Sans',sans-serif;transform:scaleX(0.9669);transform-origin:0 0;">Применение НР и СП для сборников 3.27, 3.29 и 4.10</div><div class="t" style="left:1127.66px;top:729.04px;font-size:12px;line-height:12px;font-weight:400;color:#333;font-family:'Liberation Sans',sans-serif;transform:scaleX(1.0320);transform-origin:0 0;">Автомобильные дороги</div><div class="t" style="left:1277.14px;top:730.25px;font-size:11px;line-height:11px;font-weight:400;color:#512da8;font-family:'Liberation Sans',sans-serif;">?</div><div class="t" style="left:1127.66px;top:754.24px;font-size:12px;line-height:12px;font-weight:400;color:#333;font-family:'Liberation Sans',sans-serif;transform:scaleX(1.0280);transform-origin:0 0;">Устройство покрытий дорожек, тротуаров, мостовых и площадок и прочее</div><div class="t" style="left:1093.66px;top:784.84px;font-size:12px;line-height:12px;font-weight:700;color:#262626;font-family:'Liberation Sans',sans-serif;transform:scaleX(0.9511);transform-origin:0 0;">Тоннели и метрополитены:</div><div class="t" style="left:1127.66px;top:803.84px;font-size:12px;line-height:12px;font-weight:400;color:#333;font-family:'Liberation Sans',sans-serif;transform:scaleX(1.0325);transform-origin:0 0;">Закрытый способ работ</div><div class="t" style="left:1278.74px;top:805.25px;font-size:11px;line-height:11px;font-weight:400;color:#512da8;font-family:'Liberation Sans',sans-serif;">?</div><div class="t" style="left:1127.66px;top:829.04px;font-size:12px;line-height:12px;font-weight:400;color:#333;font-family:'Liberation Sans',sans-serif;transform:scaleX(1.0278);transform-origin:0 0;">Открытый способ работ</div><div class="t" style="left:1093.66px;top:859.84px;font-size:12px;line-height:12px;font-weight:700;color:#262626;font-family:'Liberation Sans',sans-serif;transform:scaleX(0.9478);transform-origin:0 0;">Оборудование связи:</div><div class="t" style="left:1127.66px;top:878.84px;font-size:12px;line-height:12px;font-weight:400;color:#333;font-family:'Liberation Sans',sans-serif;transform:scaleX(1.0339);transform-origin:0 0;">Прокладка и монтаж сетей связи</div><div class="t" style="left:1330.94px;top:880.25px;font-size:11px;line-height:11px;font-weight:400;color:#512da8;font-family:'Liberation Sans',sans-serif;">?</div><div class="t" style="left:1127.66px;top:904.04px;font-size:12px;line-height:12px;font-weight:400;color:#333;font-family:'Liberation Sans',sans-serif;transform:scaleX(1.0368);transform-origin:0 0;">Прокладка и монтаж междугородных линий связи</div><div class="t" style="left:388.09px;top:1027.00px;font-size:13px;line-height:13px;font-weight:700;color:#111;font-family:'Liberation Sans',sans-serif;transform:scaleX(1.0398);transform-origin:0 0;">Всего</div><div class="t" style="left:445.59px;top:1027.00px;font-size:13px;line-height:13px;font-weight:400;color:#1e1e1e;font-family:'Liberation Sans',sans-serif;transform:scaleX(1.0652);transform-origin:0 0;">Б: 912,40 ₽</div><div class="t" style="left:538.09px;top:1027.00px;font-size:13px;line-height:13px;font-weight:400;color:#1e1e1e;font-family:'Liberation Sans',sans-serif;transform:scaleX(1.0614);transform-origin:0 0;">Т: 26 319,47 ₽</div><div class="t" style="left:1243.20px;top:1038.37px;font-size:20px;line-height:20px;font-weight:400;color:#c2c2c2;font-family:'Liberation Sans',sans-serif;transform:scaleX(1.0717);transform-origin:0 0;">Пересчитать смету</div><div class="t" style="left:1519.90px;top:1038.37px;font-size:20px;line-height:20px;font-weight:400;color:#fff;font-family:'Liberation Sans',sans-serif;transform:scaleX(1.0922);transform-origin:0 0;">Редактировать смету</div>
</body></html>
